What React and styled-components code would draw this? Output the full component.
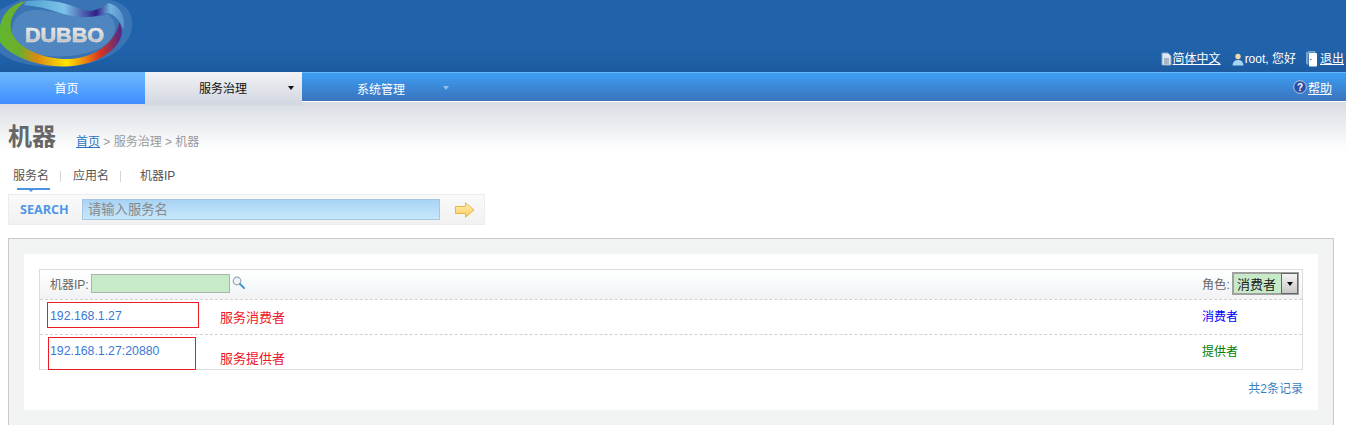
import React from "react";
import styled, { createGlobalStyle } from "styled-components";

const font = `"Liberation Sans", Arial, "Noto Sans CJK SC", sans-serif`;

const GlobalStyle = createGlobalStyle`
  html, body {
    margin: 0;
    padding: 0;
    background: #fff;
    font-family: ${font};
    font-size: 12px;
    overflow: hidden;
  }
`;

const Page = styled.div`
  width: 1346px;
  height: 425px;
  overflow: hidden;
  background: linear-gradient(#d8dce3 0, #d8dce3 102px, #fff 150px);
`;

const Header = styled.div`
  height: 72px;
  background: linear-gradient(#2063ab 0, #2063ab 50px, #1d5a9f 72px);
  display: flex;
  justify-content: space-between;
  align-items: flex-end;
  overflow: hidden;
`;

const LogoWrap = styled.div`
  width: 140px;
  height: 72px;
  flex: none;
`;

const UserBar = styled.div`
  display: flex;
  align-items: center;
  padding: 0 2px 5px 0;
  color: #fff;
  font-size: 12px;
  line-height: 16px;
`;

const UserItem = styled.span`
  display: inline-flex;
  align-items: center;
  gap: 1px;
  margin-left: ${(p) => p.$gap || 0}px;
`;

const WhiteLink = styled.a`
  color: #fff;
  text-decoration: underline;
`;

const Nav = styled.div`
  height: 30px;
  display: flex;
  background: linear-gradient(#3d9ef2, #3a73bd);
  border-top: 1px solid #66b8fb;
  border-bottom: 1px solid #fff;
  box-sizing: border-box;
`;

const NavHome = styled.div`
  width: 145px;
  height: 31px;
  margin-bottom: -3px;
  background: linear-gradient(#6cb9fd, #3f8cff);
  color: #fff;
  font-size: 12px;
  text-align: center;
  line-height: 32px;
  padding-right: 12px;
  box-sizing: border-box;
`;

const NavActive = styled.div`
  width: 157px;
  height: 33px;
  margin-top: -1px;
  background: linear-gradient(#f1f2f5, #d2d6e0);
  color: #111;
  display: flex;
  align-items: center;
  padding: 0 0 2px 54px;
  box-sizing: border-box;
  font-size: 12px;
`;

const NavItem = styled.div`
  width: 158px;
  color: #fff;
  display: flex;
  align-items: center;
  padding: 2px 0 0 55px;
  box-sizing: border-box;
  font-size: 12px;
`;

const Caret = styled.span`
  width: 0;
  height: 0;
  border-left: 3px solid transparent;
  border-right: 3px solid transparent;
  border-top: 4px solid ${(p) => p.$color};
  margin-left: ${(p) => p.$gap}px;
  margin-top: 0;
`;

const NavHelp = styled.div`
  margin-left: auto;
  padding: 0 14px 0 0;
  display: flex;
  align-items: center;
  gap: 1px;
  font-size: 12px;
`;

const Content = styled.div`
  padding: 0 12px 0 8px;
`;

const TitleRow = styled.div`
  display: flex;
  align-items: flex-end;
  height: 50px;
`;

const Title = styled.h1`
  margin: 0 20px 0 0;
  font-size: 24px;
  line-height: 28px;
  padding-bottom: 1px;
  font-weight: bold;
  color: #666;
`;

const Crumbs = styled.div`
  color: #999;
  font-size: 12px;
  line-height: 16px;
  padding-bottom: 2px;
`;

const CrumbLink = styled.a`
  color: #2a72c5;
  text-decoration: underline;
`;

const Tabs = styled.div`
  display: flex;
  align-items: center;
  height: 24px;
  margin-top: 12px;
  padding-left: 5px;
  color: #555;
  font-size: 12px;
`;

const Tab = styled.span`
  position: relative;
  line-height: 24px;
  margin-right: ${(p) => p.$right}px;
  ${(p) =>
    p.$active &&
    `
    &::after {
      content: "";
      position: absolute;
      left: 4px;
      right: -1px;
      bottom: -2px;
      height: 2px;
      background: #4a94e0;
    }
    &::before {
      content: "";
      position: absolute;
      left: 16px;
      bottom: -4px;
      border-left: 2px solid transparent;
      border-right: 2px solid transparent;
      border-top: 2px solid #4a94e0;
    }
  `}
`;

const TabSep = styled.span`
  width: 1px;
  height: 11px;
  background: #d5d5d5;
  margin-right: ${(p) => p.$right}px;
`;

const SearchBar = styled.div`
  width: 477px;
  height: 31px;
  margin-top: 6px;
  box-sizing: border-box;
  border: 1px solid #ececec;
  background: linear-gradient(#fafafa, #f1f1f1);
  display: flex;
  align-items: center;
`;

const SearchLabel = styled.span`
  width: 73px;
  padding-left: 11px;
  box-sizing: border-box;
  color: #4d97e8;
  font-size: 12.6px;
  font-weight: bold;
  font-family: "Open Sans", ${font};
`;

const SearchInput = styled.div`
  width: 358px;
  height: 21px;
  box-sizing: border-box;
  background: linear-gradient(#a8d3f5, #c8e8fc);
  border: 1px solid #a9c5e4;
  color: #888;
  font-size: 13.3px;
  line-height: 19px;
  padding-left: 5px;
`;

const GoArrow = styled.svg`
  margin-left: 15px;
`;

const Panel = styled.div`
  margin-top: 13px;
  width: 1326px;
  height: 200px;
  box-sizing: border-box;
  border: 1px solid #c9c9c9;
  background: #f2f4f4;
  padding: 15px;
`;

const Inner = styled.div`
  background: #fff;
  width: 1294px;
  height: 156px;
  box-sizing: border-box;
  padding: 15px 15px 0;
`;

const ListTable = styled.div`
  border: 1px solid #dcdcdc;
  height: 101px;
  box-sizing: border-box;
`;

const FilterRow = styled.div`
  height: 30px;
  box-sizing: border-box;
  background: linear-gradient(#fff, #f0f2f5);
  border-bottom: 1px dashed #d0d0d0;
  display: flex;
  align-items: center;
  padding: 0 3px 2px 10px;
  color: #666;
  font-size: 12px;
`;

const IpInput = styled.div`
  width: 139px;
  height: 19px;
  box-sizing: border-box;
  background: #c7ebc9;
  border: 1px solid #aab5aa;
  margin-left: 2px;
`;

const SearchIcon = styled.svg`
  margin: -2px 0 0 2px;
`;

const RoleLabel = styled.span`
  margin-left: auto;
  letter-spacing: 0.2px;
`;

const RoleSelect = styled.div`
  width: 67px;
  height: 23px;
  box-sizing: border-box;
  margin-left: 2px;
  border: 2px solid #a0a0a0;
  background: #c7ebc9;
  display: flex;
  align-items: center;
  color: #222;
  padding-left: 3px;
  font-size: 13px;
  position: relative;
`;

const SelectBtn = styled.span`
  position: absolute;
  right: -1px;
  top: -1px;
  width: 17px;
  height: 21px;
  box-sizing: border-box;
  border: 1px solid #666;
  background: linear-gradient(#f4f4f4, #c8c8c8);
  display: flex;
  align-items: center;
  justify-content: center;
  &::after {
    content: "";
    border-left: 3.5px solid transparent;
    border-right: 3.5px solid transparent;
    border-top: 4px solid #000;
  }
`;

const Row = styled.div`
  height: ${(p) => p.$height}px;
  box-sizing: border-box;
  display: flex;
  align-items: center;
  font-size: 12px;
  position: relative;
  border-bottom: ${(p) => (p.$last ? "none" : "1px dashed #d0d0d0")};
`;

const IpCell = styled.a`
  width: 180px;
  padding-left: 10px;
  box-sizing: border-box;
  color: #3c78d8;
  font-size: 12.3px;
  align-self: flex-start;
  line-height: ${(p) => p.$lh}px;
`;

const Note = styled.span`
  color: #f01428;
  font-size: 13px;
  margin-top: ${(p) => p.$top}px;
`;

const RoleCell = styled.span`
  margin-left: auto;
  width: 100px;
  margin-top: -3px;
  color: ${(p) => p.$color};
  font-size: 12px;
`;

const RedBox = styled.span`
  position: absolute;
  left: ${(p) => p.$left}px;
  top: ${(p) => p.$top}px;
  width: ${(p) => p.$w}px;
  height: ${(p) => p.$h}px;
  box-sizing: border-box;
  border: 1px solid #ed1c24;
`;

const Total = styled.div`
  text-align: right;
  color: #3a7fc1;
  font-size: 12px;
  line-height: 16px;
  margin-top: 11px;
`;

function Logo() {
  return (
    <svg width="140" height="72" viewBox="0 0 140 72">
      <defs>
        <linearGradient id="ring" x1="0" x2="1" y1="0" y2="0">
          <stop offset="0" stopColor="#63b62f" />
          <stop offset="0.16" stopColor="#6cae2c" />
          <stop offset="0.3" stopColor="#d98a12" />
          <stop offset="0.55" stopColor="#ffe600" />
          <stop offset="0.82" stopColor="#d9351f" />
          <stop offset="1" stopColor="#4a2a8a" />
        </linearGradient>
        <linearGradient id="topBand" x1="0" x2="1" y1="0" y2="0">
          <stop offset="0" stopColor="#4f9fd0" />
          <stop offset="0.4" stopColor="#7cc3ea" />
          <stop offset="0.72" stopColor="#2f1f86" />
          <stop offset="0.86" stopColor="#6fb3df" />
          <stop offset="1" stopColor="#5a8fc8" />
        </linearGradient>
        <linearGradient id="word" x1="0" x2="0" y1="0" y2="1">
          <stop offset="0" stopColor="#f6f6f6" />
          <stop offset="1" stopColor="#b8b8b8" />
        </linearGradient>
      </defs>
      <path d="M0 53 C18 68 60 70 90 63 C118 56 134 40 132 20 C131 10 122 2 110 0 L20 0 L0 10 Z" fill="#5f8fc4" opacity="0.4" />
      <path d="M12 32 C12 16 24 9 40 10 C60 12 85 22 108 14 C118 22 118 36 104 46 C84 58 44 60 26 50 C17 45 12 40 12 32 Z" fill="#4f86bf" />
      <path d="M0 26 C3 12 12 4 26 1 C15 9 9 19 11 30 C15 48 44 60 70 59 C92 58 110 46 117 30 C118 27 119 25 119 22 C124 30 123 40 112 50 C96 64 74 68 54 66 C30 64 8 54 0 42 Z" fill="url(#ring)" />
      <path d="M26 1 C45 -1 62 1 80 9 C90 13 100 10 108 3 C120 5 127 18 123 30 C121 22 116 15 108 13 C90 19 72 18 54 11 C42 7 32 6 24 5 Z" fill="url(#topBand)" />
      <text x="25" y="42" fontFamily='"Liberation Sans", Arial, sans-serif' fontWeight="bold" fontSize="20" textLength="79" lengthAdjust="spacingAndGlyphs" fill="url(#word)" stroke="#e4e4e4" strokeWidth="0.5">DUBBO</text>
    </svg>
  );
}

function DocIcon() {
  return (
    <svg width="11" height="14" viewBox="0 0 11 14">
      <path d="M1 1h6l3 3v9H1z" fill="#dfe8f2" stroke="#8fa6c2" />
      <path d="M3 7h5M3 9h5M3 11h5" stroke="#6f8196" />
    </svg>
  );
}

function UserIcon() {
  return (
    <svg width="12" height="13" viewBox="0 0 12 13">
      <circle cx="6" cy="3.5" r="2.7" fill="#f0d9a8" />
      <path d="M0.5 12.5C1 8 3.5 7 6 7s5 1 5.5 5.5z" fill="#a8d4f2" />
    </svg>
  );
}

function DoorIcon() {
  return (
    <svg width="13" height="16" viewBox="0 0 13 16">
      <path d="M0.5 1.5L3 .5h6v2H2v11l-1.5-1z" fill="#5b92cf" stroke="#a9c8e8" strokeWidth="0.6" />
      <rect x="3" y="2" width="8" height="13.5" rx="1" fill="#fff" />
      <circle cx="4.8" cy="8.5" r="0.7" fill="#456" />
    </svg>
  );
}

function HelpIcon() {
  return (
    <svg width="14" height="14" viewBox="0 0 14 14">
      <circle cx="7" cy="7" r="6.3" fill="#2a4fa8" stroke="#b9c6d8" />
      <text x="7" y="10.5" textAnchor="middle" fontSize="10" fontWeight="bold" fill="#fff" fontFamily='"Liberation Sans", sans-serif'>?</text>
    </svg>
  );
}

export default function App() {
  return (
    <Page>
      <GlobalStyle />
      <Header>
        <LogoWrap>
          <Logo />
        </LogoWrap>
        <UserBar>
          <UserItem>
            <DocIcon />
            <WhiteLink>简体中文</WhiteLink>
          </UserItem>
          <UserItem $gap={11}>
            <UserIcon />
            root, 您好
          </UserItem>
          <UserItem $gap={10}>
            <DoorIcon />
            <WhiteLink>退出</WhiteLink>
          </UserItem>
        </UserBar>
      </Header>
      <Nav>
        <NavHome>首页</NavHome>
        <NavActive>
          服务治理
          <Caret $color="#111" $gap={41} />
        </NavActive>
        <NavItem>
          系统管理
          <Caret $color="#8fc0ee" $gap={38} />
        </NavItem>
        <NavHelp>
          <HelpIcon />
          <WhiteLink>帮助</WhiteLink>
        </NavHelp>
      </Nav>
      <Content>
        <TitleRow>
          <Title>机器</Title>
          <Crumbs>
            <CrumbLink>首页</CrumbLink> &gt; 服务治理 &gt; 机器
          </Crumbs>
        </TitleRow>
        <Tabs>
          <Tab $active $right={11}>服务名</Tab>
          <TabSep $right={12} />
          <Tab $right={11}>应用名</Tab>
          <TabSep $right={19} />
          <Tab $right={0}>机器IP</Tab>
        </Tabs>
        <SearchBar>
          <SearchLabel>SEARCH</SearchLabel>
          <SearchInput>请输入服务名</SearchInput>
          <GoArrow width="20" height="16" viewBox="0 0 20 16">
            <defs>
              <linearGradient id="arrowFill" x1="0" x2="0" y1="0" y2="1">
                <stop offset="0" stopColor="#fff2b8" />
                <stop offset="1" stopColor="#fbc95a" />
              </linearGradient>
            </defs>
            <path d="M.5 4.5h10V.8L19 8l-8.500 7.200V11.500H.5z" fill="url(#arrowFill)" stroke="#e8b548" />
          </GoArrow>
        </SearchBar>
        <Panel>
          <Inner>
            <ListTable>
              <FilterRow>
                机器IP:
                <IpInput />
                <SearchIcon width="13" height="13" viewBox="0 0 13 13">
                  <circle cx="5" cy="5" r="3.8" fill="#eef5fa" stroke="#9aa8b0" strokeWidth="1.2" />
                  <path d="M8 8l4 4" stroke="#3f9bd0" strokeWidth="2" strokeLinecap="round" />
                </SearchIcon>
                <RoleLabel>角色:</RoleLabel>
                <RoleSelect>
                  消费者
                  <SelectBtn />
                </RoleSelect>
              </FilterRow>
              <Row $height={35}>
                <IpCell $lh={33}>192.168.1.27</IpCell>
                <Note $top={-1}>服务消费者</Note>
                <RoleCell $color="#0000ff">消费者</RoleCell>
                <RedBox $left={7} $top={2} $w={152} $h={26} />
              </Row>
              <Row $height={34} $last>
                <IpCell $lh={33}>192.168.1.27:20880</IpCell>
                <Note $top={11}>服务提供者</Note>
                <RoleCell $color="#008000">提供者</RoleCell>
                <RedBox $left={8} $top={2} $w={148} $h={33} />
              </Row>
            </ListTable>
            <Total>共2条记录</Total>
          </Inner>
        </Panel>
      </Content>
    </Page>
  );
}
